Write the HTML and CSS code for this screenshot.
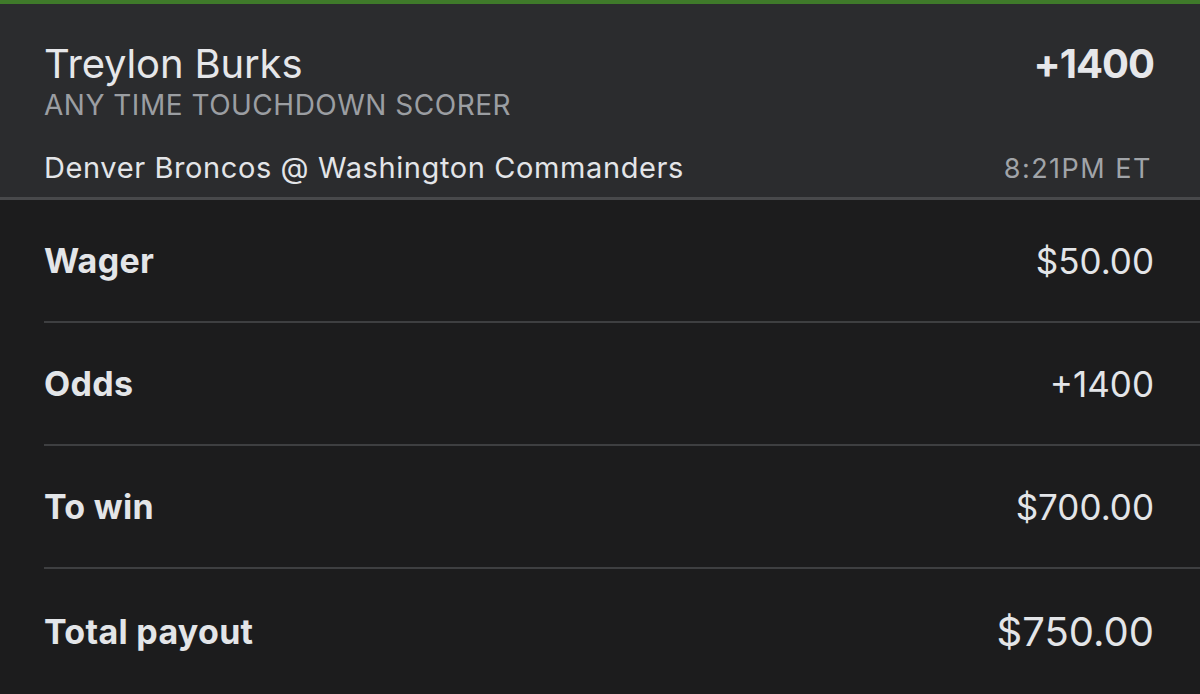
FILE: index.html
```html
<!DOCTYPE html>
<html>
<head>
<meta charset="utf-8">
<link rel="stylesheet" href="styles.css">
</head>
<body>
<div class="slip">
  <div class="accent"></div>
  <header class="leg">
    <div class="leg-top">
      <div class="leg-info">
        <div class="player">Treylon Burks</div>
        <div class="market">ANY TIME TOUCHDOWN SCORER</div>
      </div>
      <div class="leg-odds">+1400</div>
    </div>
    <div class="leg-bottom">
      <div class="game">Denver Broncos @ Washington Commanders</div>
      <div class="time">8:21PM ET</div>
    </div>
  </header>
  <section class="details">
    <div class="row"><span class="label">Wager</span><span class="value">$50.00</span></div>
    <div class="row"><span class="label">Odds</span><span class="value">+1400</span></div>
    <div class="row"><span class="label">To win</span><span class="value">$700.00</span></div>
    <div class="row total"><span class="label">Total payout</span><span class="value">$750.00</span></div>
  </section>
</div>
</body>
</html>
```
FILE: styles.css
```css
html, body {
  margin: 0;
  padding: 0;
  background: #1c1c1d;
}
body {
  font-family: "Inter", "Lato", "Liberation Sans", sans-serif;
  color: #e3e5e8;
  width: 1200px;
  height: 694px;
  overflow: hidden;
}
.slip {
  display: flex;
  flex-direction: column;
  height: 694px;
}
.accent {
  height: 4px;
  background: #3f7a2a;
}
.leg {
  background: #2b2c2e;
  height: 196px;
  box-sizing: border-box;
  padding: 0 46px 0 44px;
  border-bottom: 3px solid #48494b;
  display: flex;
  flex-direction: column;
}
.leg-top {
  display: flex;
  justify-content: space-between;
  align-items: flex-start;
  padding-top: 36px;
}
.player {
  font-size: 40px;
  line-height: 48px;
  font-weight: 400;
  letter-spacing: -0.15px;
  color: #e6e7ea;
}
.market {
  font-size: 28px;
  line-height: 30px;
  letter-spacing: 0.5px;
  color: #9b9ea2;
  margin-top: 2px;
}
.leg-odds {
  font-size: 40px;
  line-height: 48px;
  font-weight: 700;
  letter-spacing: -1px;
  color: #e6e7ea;
}
.leg-bottom {
  display: flex;
  justify-content: space-between;
  align-items: baseline;
  margin-top: 30px;
}
.game {
  font-size: 29px;
  letter-spacing: 0.6px;
  color: #e3e5e8;
}
.time {
  font-size: 27px;
  letter-spacing: 1.5px;
  color: #a1a4a8;
  margin-right: 2px;
}
.details {
  flex: 1;
  padding-left: 44px;
  display: flex;
  flex-direction: column;
}
.row {
  height: 123px;
  box-sizing: border-box;
  display: flex;
  justify-content: space-between;
  align-items: center;
  padding-right: 46px;
  border-bottom: 2px solid #3e3f41;
}
.row.total {
  border-bottom: none;
  flex: 1;
}
.label {
  font-size: 34px;
  font-weight: 700;
  letter-spacing: 0.3px;
  color: #e3e5e8;
}
.value {
  font-size: 35px;
  font-weight: 400;
  color: #e3e5e8;
}
.total .value {
  font-size: 40px;
}
```
